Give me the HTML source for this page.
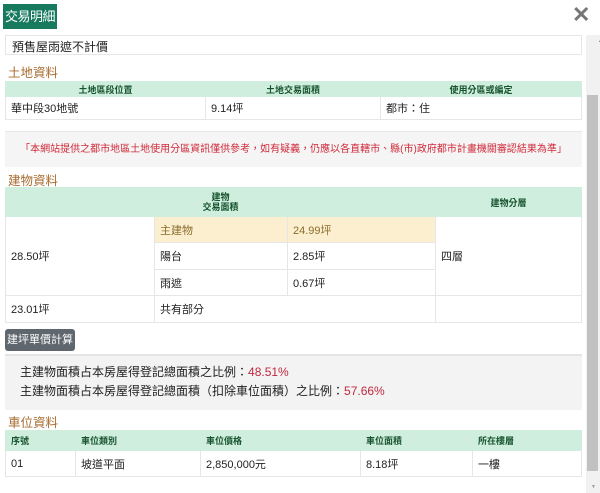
<!DOCTYPE html>
<html><head><meta charset="utf-8"><style>
*{box-sizing:border-box;margin:0;padding:0}
body{width:600px;height:493px;overflow:hidden;background:#fff;font-family:"Liberation Sans","Noto Sans CJK TC",sans-serif;font-size:12px;color:#222;position:relative}
.abs{position:absolute}
.title{left:3px;top:4px;width:54px;height:25px;background:#177a5f;color:#fff;font-size:13px;line-height:25px;text-align:center;white-space:nowrap;letter-spacing:-0.5px}
.x{left:572px;top:2px;font-size:22px;color:#777;font-weight:bold}
.sb{left:586px;top:35px;width:14px;height:458px;background:#f1f1f1}
.th{left:587px;top:95px;width:11px;height:376px;background:#c1c1c1}
table{position:absolute;border-collapse:collapse;left:5px;width:577px}
td{border:1px solid #e6e6e6;padding:0 5px;font-size:11px}
.h td{background:#cfeedd;color:#16532e;font-size:9px;font-weight:bold;border-color:#cfeedd}
.sec{color:#a86a2e;font-size:12.5px;left:8px}
.red{color:#c0283e}
</style></head><body>
<div class="abs title">交易明細</div>
<div class="abs x">✕</div>
<div class="abs sb"></div><div class="abs th"></div>
<div class="abs" style="left:598px;top:38px;font-size:5px;color:#777">▲</div>
<div class="abs" style="left:5px;top:35px;width:577px;height:20px;border:1px solid #e6e6e6;padding:2px 6px;font-size:12px">預售屋雨遮不計價</div>
<div class="abs sec" style="top:62px">土地資料</div>
<table style="top:81px">
<tr class="h" style="height:15px"><td style="width:200px;text-align:center">土地區段位置</td><td style="width:175px;text-align:center">土地交易面積</td><td style="text-align:center">使用分區或編定</td></tr>
<tr style="height:23px"><td>華中段30地號</td><td>9.14坪</td><td>都市：住</td></tr>
</table>
<div class="abs" style="left:5px;top:131px;width:577px;height:36px;background:#f5f5f5;border-top:1px solid #e8e8e8;color:#d02a3a;font-size:10px;text-align:center;line-height:35px">「本網站提供之都市地區土地使用分區資訊僅供參考，如有疑義，仍應以各直轄市、縣(市)政府都市計畫機關審認結果為準」</div>
<div class="abs sec" style="top:170px">建物資料</div>
<table style="top:187px">
<tr class="h" style="height:29px"><td colspan="3" style="text-align:center;line-height:10px">建物<br>交易面積</td><td style="text-align:center">建物分層</td></tr>
<tr style="height:26px"><td rowspan="3" style="width:149px">28.50坪</td><td style="width:133px;background:#fcefcf;color:#8a6d2e">主建物</td><td style="width:148px;background:#fcefcf;color:#8a6d2e">24.99坪</td><td rowspan="3">四層</td></tr>
<tr style="height:27px"><td>陽台</td><td>2.85坪</td></tr>
<tr style="height:26px"><td>雨遮</td><td>0.67坪</td></tr>
<tr style="height:27px"><td>23.01坪</td><td colspan="2">共有部分</td><td></td></tr>
</table>
<div class="abs" style="left:5px;top:329px;width:70px;height:22px;background:#5f666d;color:#fff;border-radius:3px;font-size:11px;line-height:22px;text-align:center">建坪單價計算</div>
<div class="abs" style="left:5px;top:354px;width:577px;height:56px;background:#f3f3f3;border-top:2px solid #e4e4e4;padding:7px 15px;font-size:12px;line-height:19px">主建物面積占本房屋得登記總面積之比例：<span class="red">48.51%</span><br>主建物面積占本房屋得登記總面積（扣除車位面積）之比例：<span class="red">57.66%</span></div>
<div class="abs sec" style="top:412px">車位資料</div>
<table style="top:430px">
<tr class="h" style="height:20px"><td style="width:70px">序號</td><td style="width:125px">車位類別</td><td style="width:160px">車位價格</td><td style="width:112px">車位面積</td><td>所在樓層</td></tr>
<tr style="height:26px"><td>01</td><td>坡道平面</td><td>2,850,000元</td><td>8.18坪</td><td>一樓</td></tr>
</table>
<div class="abs" style="left:591px;top:484px;font-size:5px;color:#999">▼</div>
</body></html>
